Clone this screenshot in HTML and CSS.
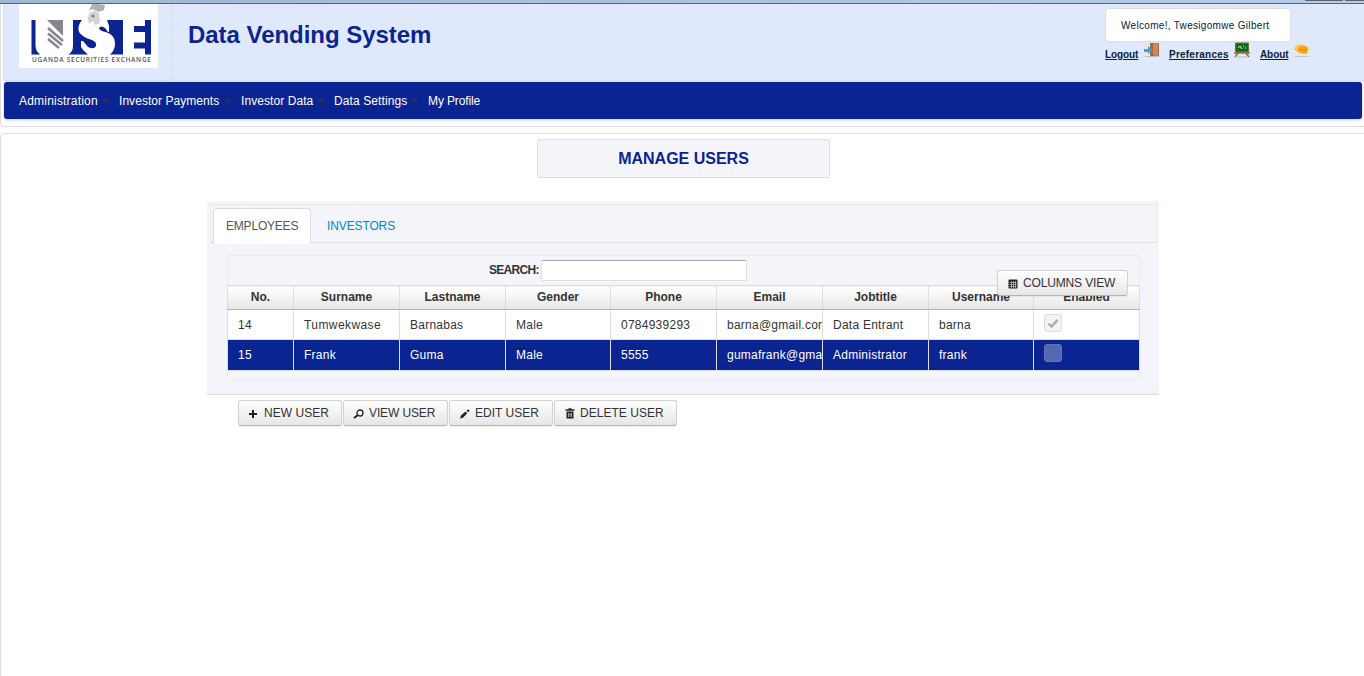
FILE: index.html
```html
<!DOCTYPE html>
<html lang="en">
<head>
<meta charset="utf-8">
<title>Data Vending System</title>
<link rel="stylesheet" href="styles.css">
</head>
<body>
<div class="strip"><i class="strip-a"></i><i class="strip-b"></i></div>
<header class="top">
  <div class="masthead">
    <div class="logo-cell">
      <svg class="logo" width="139" height="64" viewBox="0 0 139 64">
        <rect width="139" height="64" fill="#fff"/>
        <path fill="#0a2492" d="M12.500 16h4v25q0 7 5 9.500h-9z"/>
        <path fill="#0a2492" d="M54 16h9q-5 6-3 12 3 5 13 8 5 2 4 6-2 4-8 1l-5-6h-2v6q3 5 7 7.500H49q5-2 5-9z"/>
        <path fill="#0a2492" d="M88 16h16v34.500H91q5-4 5-11 0-8-8-11-8-2-8-4.500 2-3 6 0l3 4h1v-6z"/>
        <path fill="#0a2492" d="M126 16h6v34.500h-6v-6h-11v-6h11V28h-11v-6h11z"/>
        <path fill="#85858d" d="M28 16h16v16z"/>
        <path d="M29 24l15 13M29 29.500l14 11.500M29 35l11 9" stroke="#85858d" stroke-width="2.500" fill="none"/>
        <path fill="#b0b0b5" d="M73 0h7l6 1-1 5-5 2-7-3-3 2z"/>
        <path fill="#d3d3d7" d="M70 9l6-2 4 2 1 10-5 2-2-4-4 3-1-5z"/>
        <circle cx="74" cy="12" r="1.500" fill="#777"/>
        <text class="logo-text" x="13" y="58" textLength="119">UGANDA SECURITIES EXCHANGE</text>
      </svg>
    </div>
    <h1>Data Vending System</h1>
    <div class="account">
      <div class="welcome"><span>Welcome!, Twesigomwe Gilbert</span></div>
      <div class="links">
        <a class="l1">Logout</a>
        <svg width="16" height="16" viewBox="0 0 16 16"><path d="M6 1h9v13H6z" fill="#a9693c"/><path d="M9 2l5-1v13l-5-1z" fill="#c98b58"/><path d="M0 7h4V4l4 4-4 4v-2H0z" fill="#4aa3cf"/><path d="M1 14.500h14" stroke="#bbb"/></svg>
        <a class="l2">Preferances</a>
        <svg width="16" height="16" viewBox="0 0 16 16"><path d="M5 10l-4 5M11 10l4 5M0 11h16" stroke="#9c6a2c" stroke-width="1.500"/><path d="M3 15h10" stroke="#bbb"/><path d="M1.500 1h13v9h-13z" fill="#126a1d" stroke="#6b7430"/><path d="M4 6l2-2 2 3M9 4h1M11 6h1" stroke="#dfd" fill="none"/></svg>
        <a class="l3">About</a>
        <svg width="16" height="16" viewBox="0 0 16 16"><ellipse cx="6" cy="6.500" rx="5.500" ry="4" fill="#f6c65a"/><ellipse cx="9" cy="7.500" rx="5.500" ry="4" fill="#fba70b"/><path d="M10 11l3 1.500v-3z" fill="#fba70b"/><path d="M6 7.500h6" stroke="#c66d00" stroke-dasharray="1.300 1"/><path d="M1 14.500h14" stroke="#c3c6ca"/></svg>
      </div>
    </div>
  </div>
  <nav class="menu">
    <a class="m1">Administration</a><a class="m2">Investor Payments</a><a class="m3">Investor Data</a><a class="m4">Data Settings</a><a class="m5">My Profile</a>
  </nav>
</header>
<main>
  <h2>MANAGE USERS</h2>
  <section class="panel">
    <div class="tabs"><a class="tab active">EMPLOYEES</a><a class="tab">INVESTORS</a></div>
    <div class="grid">
      <div class="search"><label>SEARCH:</label><input type="text"></div>
      <button class="btn columns"><svg width="10" height="10" viewBox="0 0 10 10"><rect x=".5" y=".5" width="9" height="9" rx="1" fill="#222"/><path d="M1.500 3.500h7M1.500 5.500h7M1.500 7.500h7M3.500 2v7M5.500 2v7M7.500 2v7" stroke="#ddd" stroke-width=".6"/></svg><span>COLUMNS VIEW</span></button>
      <table>
        <colgroup><col class="c0"><col><col><col class="cn"><col><col><col><col class="cn"><col></colgroup>
        <thead><tr><th>No.</th><th>Surname</th><th>Lastname</th><th>Gender</th><th>Phone</th><th>Email</th><th>Jobtitle</th><th>Username</th><th>Enabled</th></tr></thead>
        <tbody>
          <tr><td>14</td><td class="wide">Tumwekwase</td><td>Barnabas</td><td>Male</td><td>0784939293</td><td>barna@gmail.com</td><td>Data Entrant</td><td>barna</td><td><span class="check"><svg width="18" height="18" viewBox="0 0 18 18"><path d="M4.500 9.500l3 3 6-6.500" fill="none" stroke="#aaa" stroke-width="2.400"/></svg></span></td></tr>
          <tr class="sel"><td>15</td><td>Frank</td><td>Guma</td><td>Male</td><td>5555</td><td>gumafrank@gmail.com</td><td>Administrator</td><td>frank</td><td><span class="check"></span></td></tr>
        </tbody>
      </table>
    </div>
  </section>
  <div class="actions">
    <button class="btn b1"><svg width="10" height="10" viewBox="0 0 10 10"><path d="M4 1v8M0 5h8" stroke="#222" stroke-width="2"/></svg><span>NEW USER</span></button>
    <button class="btn b2"><svg width="11" height="10" viewBox="0 0 11 10"><circle cx="7" cy="4" r="3" fill="none" stroke="#222" stroke-width="1.300"/><path d="M5 6L1 9" stroke="#222" stroke-width="2"/></svg><span>VIEW USER</span></button>
    <button class="btn b3"><svg width="10" height="10" viewBox="0 0 10 10"><path d="M0 9.500l1-3 4.500-4 1.700 1.700L3 8.700zM6.500 1.700L8 .3l1.700 1.500-1.400 1.500z" fill="#222"/></svg><span>EDIT USER</span></button>
    <button class="btn b4"><svg width="10" height="11" viewBox="0 0 10 11"><path d="M.5 2h9M3.500 1h3" stroke="#222" stroke-width="1.300"/><path d="M1.500 3.500h7v7h-7z" fill="#222"/><path d="M3.500 5v4M5 5v4M6.500 5v4" stroke="#ddd" stroke-width=".7"/></svg><span>DELETE USER</span></button>
  </div>
</main>
</body>
</html>
```
FILE: styles.css
```css
* { box-sizing: border-box; }
html, body { margin: 0; height: 676px; overflow: hidden; }
body { display: flex; flex-direction: column; background: #fff; color: #333; font: 12px "Liberation Sans", Arial, sans-serif; }
.strip { height: 4px; flex: none; display: flex; justify-content: flex-end; gap: 2px; background: linear-gradient(90deg, #9db7d5, #b5cee9); border-bottom: 1px solid #5f646b; }
.strip i { height: 1px; background: #5f646b; }
.strip-a { width: 38px; }
.strip-b { width: 19px; }
.top { flex: none; height: 123px; margin-right: -4px; padding: 0 0 0 2px; border: 1px solid #ddd; border-top: 0; border-radius: 0 0 4px 4px; }
.masthead { height: 78px; width: 1361px; display: flex; background: #dfe9fb; }
.logo-cell { width: 170px; height: 77px; padding-left: 16px; border: 1px dashed #d6d8dc; border-top: 0; border-radius: 0 0 4px 4px; }
.logo { display: block; margin-left: -1px; }
.logo-text { font: 600 6.500px "Open Sans", sans-serif; fill: #555; }
h1 { margin: 15px 0 0 15px; width: 917px; font-size: 24px; line-height: 32px; color: #0a2492; letter-spacing: -.04px; }
.account { font-size: 10px; color: #0a2140; }
.welcome { margin-top: 4px; width: 186px; height: 34px; padding: 11px 15px; line-height: 12px; border: 1px solid #ddd; border-radius: 4px; background: #fff; white-space: nowrap; letter-spacing: .31px; }
.links { display: flex; align-items: flex-start; height: 22px; line-height: 13px; }
.links a { margin-top: 6px; font-weight: bold; text-decoration: underline; }
.links svg { margin-left: 5px; }
.l1 { width: 34px; letter-spacing: -.1px; } .l2 { width: 60px; margin-left: 9px; letter-spacing: .23px; } .l3 { width: 29px; margin-left: 10px; letter-spacing: -.1px; }
.menu { height: 37px; width: 1358px; margin-left: 1px; padding-left: 15px; display: flex; align-items: center; background: #0a2492; border-radius: 3px; box-shadow: 0 1px 3px #ccc; color: #fff; white-space: nowrap; }
.menu a { display: flex; align-items: center; justify-content: space-between; }
.menu a:not(:last-child)::after { content: ""; border: 4px solid transparent; border-top-color: #333; border-bottom: 0; margin-right: 9px; }
.m1 { width: 100px; letter-spacing: .2px; } .m2 { width: 122px; letter-spacing: .05px; } .m3 { width: 93px; letter-spacing: .07px; } .m4 { width: 94px; letter-spacing: .1px; } .m5 { letter-spacing: -.12px; }
main { flex: 1; margin: 6px -4px -4px 0; padding-top: 5px; border: 1px solid #ddd; border-radius: 4px; }
h2 { margin: 0 0 0 536px; width: 293px; height: 39px; line-height: 37px; text-align: center; font-size: 16px; color: #0a2492; background: #f4f5fb; border: 1px solid #ddd; border-radius: 3px; }
.panel { margin: 23px 0 0 206px; width: 952px; height: 194px; padding: 3px; background: #f4f5fb; border-bottom: 1px solid #ddd; }
.tabs { width: 947px; height: 39px; padding: 3px 2px 0; display: flex; border: 1px solid #eaebee; border-bottom-color: #ddd; }
.tab { height: 36px; padding: 0 12px; line-height: 34px; color: #08c; border: 1px solid transparent; border-bottom: 0; letter-spacing: -.12px; }
.tab + .tab { margin-left: 3px; }
.tab.active { width: 98px; color: #555; background: #fff; border-color: #ddd; border-radius: 4px 4px 0 0; letter-spacing: -.2px; }
.grid { position: relative; margin: 12px 0 0 17px; width: 913px; height: 125px; border: 1px solid #eaebee; border-radius: 4px; }
.search { height: 29px; padding: 4px 0 0 261px; display: flex; line-height: 20px; }
.search label { width: 52px; font-weight: bold; white-space: nowrap; letter-spacing: -.75px; word-spacing: 0; }
.search label { letter-spacing: -.7px; }
.search input { width: 206px; height: 21px; border: 1px solid #ddd; border-top-color: #aaa; border-radius: 2px; background: #fff; }
table { width: 913px; margin-left: -1px; table-layout: fixed; border-collapse: collapse; }
.c0 { width: 66px; } col { width: 106px; } .cn { width: 105px; }
th { height: 24px; padding: 1px 0 0; line-height: 20px; vertical-align: top; border: 1px solid #ddd; border-bottom-color: #b3b3b3; background: linear-gradient(#fff, #e6e6e6); }
td { height: 30px; padding: 0 0 0 10px; overflow: hidden; white-space: nowrap; background: #fff; border: 1px solid #ddd; letter-spacing: .25px; }
td.wide { letter-spacing: .42px; }
.sel td { height: 31px; color: #fff; background: #0a2492; }
.check { display: block; width: 18px; height: 18px; margin-top: -3px; border: 1px solid #ddd; border-radius: 3px; background: #f3f3f3; }
.check svg { display: block; margin: -1px; }
.sel .check { margin-top: -5px; background: #5467b0; border-color: #6273b5; }
.btn { height: 26px; padding: 0 0 1px 10px; display: flex; align-items: center; color: #333; font: 12px "Liberation Sans", Arial, sans-serif; white-space: nowrap; border: 1px solid #d2d2d2; border-bottom-color: #b3b3b3; border-radius: 3px; background: linear-gradient(#fff, #e6e6e6); box-shadow: 0 1px 2px #0001; letter-spacing: .03px; }
.btn svg { margin: 2px 5px 0 0; flex: none; }
.columns { position: absolute; left: 769px; top: 14px; width: 131px; letter-spacing: -.15px; }
.actions { display: flex; gap: 1px; margin: 5px 0 0 237px; }
.b1 { width: 104px; } .b2 { width: 105px; padding-left: 9px; letter-spacing: -.12px; } .b3 { width: 104px; } .b4 { width: 123px; }
```
